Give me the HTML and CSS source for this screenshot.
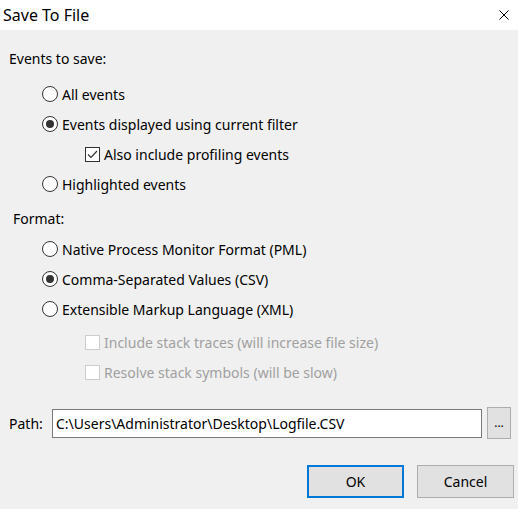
FILE: index.html
```html
<!DOCTYPE html>
<html>
<head>
<meta charset="utf-8">
<link rel="stylesheet" href="styles.css">
</head>
<body>
<div class="dialog">
  <div class="titlebar">
    <span class="title">Save To File</span>
    <svg class="close" width="10" height="10" viewBox="0 0 10 10"><path d="M0.5 0.5 L9.5 9.5 M9.5 0.5 L0.5 9.5" stroke="#000" stroke-width="1" fill="none"/></svg>
  </div>
  <div class="body">
    <div class="group-label">Events to save:</div>
    <div class="options">
      <div class="opt"><span class="radio"></span><span>All events</span></div>
      <div class="opt"><span class="radio on"></span><span>Events displayed using current filter</span></div>
      <div class="opt sub"><span class="check"><svg width="13" height="13" viewBox="0 0 13 13"><path d="M2 6.5 L5 9.5 L11 3" stroke="#333" stroke-width="1.2" fill="none"/></svg></span><span>Also include profiling events</span></div>
      <div class="opt"><span class="radio"></span><span>Highlighted events</span></div>
    </div>
    <div class="group-label format">Format:</div>
    <div class="options">
      <div class="opt"><span class="radio"></span><span>Native Process Monitor Format (PML)</span></div>
      <div class="opt"><span class="radio on"></span><span>Comma-Separated Values (CSV)</span></div>
      <div class="opt"><span class="radio"></span><span>Extensible Markup Language (XML)</span></div>
    </div>
    <div class="options disabled-opts">
      <div class="opt sub disabled"><span class="check"></span><span>Include stack traces (will increase file size)</span></div>
      <div class="opt sub disabled"><span class="check"></span><span>Resolve stack symbols (will be slow)</span></div>
    </div>
    <div class="path-row">
      <span class="path-label">Path:</span>
      <div class="path-input">C:\Users\Administrator\Desktop\Logfile.CSV</div>
      <div class="browse">...</div>
    </div>
    <div class="buttons">
      <div class="btn default">OK</div>
      <div class="btn">Cancel</div>
    </div>
  </div>
</div>
</body>
</html>
```
FILE: styles.css
```css
html, body {
  margin: 0;
  padding: 0;
}
body {
  width: 518px;
  height: 509px;
  overflow: hidden;
  background: #f0f0f0;
  font-family: "Noto Sans", "Open Sans", sans-serif;
  font-size: 14px;
  color: #000;
}
.dialog {
  width: 518px;
  height: 509px;
  display: flex;
  flex-direction: column;
}
.titlebar {
  height: 30px;
  background: #fff;
  display: flex;
  align-items: center;
  justify-content: space-between;
  padding: 0 9px 0 3px;
  box-sizing: border-box;
}
.title {
  font-size: 16px;
  line-height: 30px;
}
.close {
  display: block;
  margin-top: -1px;
}
.body {
  flex: 1;
  padding: 14px 0 0 0;
  display: flex;
  flex-direction: column;
}
.group-label {
  height: 30px;
  line-height: 30px;
  padding-left: 9px;
}
.group-label.format {
  padding-left: 13px;
  margin-top: 5px;
}
.options {
  margin-top: 5px;
  display: flex;
  flex-direction: column;
}
.options.disabled-opts {
  margin-top: 3px;
}
.format + .options {
  margin-top: 0;
}
.opt {
  height: 30px;
  display: flex;
  align-items: center;
  gap: 4px;
  padding-left: 42px;
  white-space: nowrap;
}
.opt.sub {
  padding-left: 85px;
}
.radio {
  width: 16px;
  height: 16px;
  box-sizing: border-box;
  border: 1px solid #333;
  border-radius: 50%;
  background: #fff;
  display: flex;
  align-items: center;
  justify-content: center;
  flex: none;
}
.radio.on::after {
  content: "";
  width: 8px;
  height: 8px;
  border-radius: 50%;
  background: #333;
}
.check {
  width: 15px;
  height: 15px;
  box-sizing: border-box;
  border: 1px solid #333;
  background: #fff;
  display: flex;
  align-items: center;
  justify-content: center;
  flex: none;
}
.check svg {
  display: block;
}
.opt.disabled {
  color: #a0a0a0;
}
.opt.disabled .check {
  border-color: #cccccc;
}
.path-row {
  margin-top: 20px;
  display: flex;
  align-items: center;
  height: 32px;
  padding-left: 9px;
}
.path-label {
  width: 43px;
  flex: none;
}
.path-input {
  width: 430px;
  height: 29px;
  box-sizing: border-box;
  border: 1px solid #7a7a7a;
  background: #fff;
  line-height: 27px;
  padding-left: 3px;
  white-space: nowrap;
}
.browse {
  margin-left: 5px;
  width: 24px;
  height: 32px;
  box-sizing: border-box;
  border: 1px solid #adadad;
  background: #e1e1e1;
  text-align: center;
  line-height: 30px;
  font-size: 12px;
}
.buttons {
  margin-top: 26px;
  display: flex;
  gap: 13px;
  padding-left: 307px;
}
.btn {
  width: 97px;
  height: 33px;
  box-sizing: border-box;
  border: 1px solid #adadad;
  background: #e1e1e1;
  text-align: center;
  line-height: 31px;
}
.btn.default {
  border: 2px solid #0078d7;
  line-height: 29px;
}
```
